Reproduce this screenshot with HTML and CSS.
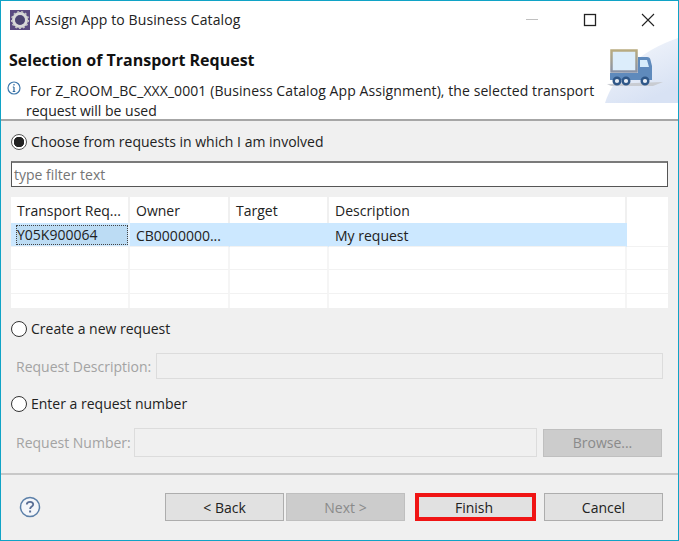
FILE: index.html
```html
<!DOCTYPE html>
<html lang="en">
<head>
    <meta charset="UTF-8">
    <meta name="viewport" content="width=device-width, initial-scale=1.0">
    <title>Assign App to Business Catalog</title>
    <link rel="stylesheet" href="styles.css">
</head>
<body>
<div class="window">

    <!-- Title bar -->
    <div class="title-bar">
        <svg class="app-icon" width="20" height="20" viewBox="0 0 20 20">
            <rect width="20" height="20" fill="#5a4a80"/>
            <circle cx="10" cy="10" r="6.5" fill="none" stroke="#d8d8d8" stroke-width="3"/>
            <circle cx="10" cy="10" r="8.3" fill="none" stroke="#c4c4c4" stroke-width="1.6" stroke-dasharray="2 2"/>
            <circle cx="10" cy="10" r="4.6" fill="#4b4470"/>
        </svg>
        <span class="title-text">Assign App to Business Catalog</span>
        <div class="window-controls">
            <svg width="14" height="14" viewBox="0 0 14 14"><path d="M1 6.500H13" stroke="#c0c0c0" fill="none"/></svg>
            <svg width="14" height="14" viewBox="0 0 14 14"><rect x="1.500" y="1.500" width="11" height="11" fill="none" stroke="#222" stroke-width="1.300"/></svg>
            <svg width="14" height="14" viewBox="0 0 14 14"><path d="M1 1L13 13M13 1L1 13" stroke="#222" fill="none" stroke-width="1.100"/></svg>
        </div>
    </div>

    <!-- Wizard header -->
    <div class="wizard-header">
        <svg class="banner" width="75" height="65" viewBox="0 0 75 65">
            <defs>
                <linearGradient id="swoosh" x1="0" y1="0" x2="0.5" y2="1">
                    <stop offset="0" stop-color="#f6f8fc"/>
                    <stop offset="1" stop-color="#d8e2f4"/>
                </linearGradient>
                <linearGradient id="box" x1="0" y1="0" x2="0" y2="1">
                    <stop offset="0" stop-color="#b8ab80"/>
                    <stop offset="1" stop-color="#8a93a6"/>
                </linearGradient>
            </defs>
            <path d="M2 65C10 38 38 12 75 0V65Z" fill="url(#swoosh)"/>
            <path d="M4 46L60 44L50 48H8Z" fill="#c9ccd2"/>
            <rect x="8.500" y="12.500" width="25" height="21" fill="#dcedfb" stroke="url(#box)" stroke-width="2.500"/>
            <path d="M35 19H44Q47 19 47.500 22L49 28V42H7V35H35Z" fill="#5f8abc"/>
            <path d="M37 22H44L46 29H37Z" fill="#d7ecfb"/>
            <circle cx="14" cy="43" r="3.300" fill="#e8eef6" stroke="#2f5788" stroke-width="2.400"/>
            <circle cx="23" cy="43" r="3.300" fill="#e8eef6" stroke="#2f5788" stroke-width="2.400"/>
            <circle cx="42" cy="43" r="3.300" fill="#e8eef6" stroke="#2f5788" stroke-width="2.400"/>
        </svg>
        <h1>Selection of Transport Request</h1>
        <div class="message">
            <svg class="info-icon" width="14" height="14" viewBox="0 0 14 14">
                <circle cx="7" cy="7" r="6" fill="#fff" stroke="#3d78ad" stroke-width="1.200"/>
                <path d="M7 3V4.600M7 6V10.500M5.700 10.500H8.300M5.800 6H7" stroke="#2f6a9f" fill="none" stroke-width="1.200"/>
            </svg>
            <p><span class="first-line">For Z_ROOM_BC_XXX_0001 (Business Catalog App Assignment), the selected transport</span><br>request will be used</p>
        </div>
    </div>

    <!-- Request selection -->
    <div class="content">
        <label class="radio-row first"><span class="radio checked"></span>Choose from requests in which I am involved</label>
        <div class="filter">type filter text</div>

        <table class="requests">
            <colgroup>
                <col class="col-request">
                <col class="col-owner">
                <col class="col-target">
                <col class="col-desc">
                <col>
            </colgroup>
            <thead>
                <tr>
                    <th>Transport Req...</th>
                    <th>Owner</th>
                    <th>Target</th>
                    <th>Description</th>
                    <th></th>
                </tr>
            </thead>
            <tbody>
                <tr class="selected">
                    <td><span class="focus-cell">Y05K900064</span></td>
                    <td>CB0000000...</td>
                    <td></td>
                    <td>My request</td>
                    <td class="filler"></td>
                </tr>
                <tr><td></td><td></td><td></td><td></td><td></td></tr>
                <tr class="tall"><td></td><td></td><td></td><td></td><td></td></tr>
                <tr class="last"><td></td><td></td><td></td><td></td><td></td></tr>
            </tbody>
        </table>

        <label class="radio-row create"><span class="radio"></span>Create a new request</label>
        <div class="field-row description">
            <span class="field-label">Request Description:</span>
            <div class="field"></div>
        </div>

        <label class="radio-row enter"><span class="radio"></span>Enter a request number</label>
        <div class="field-row number">
            <span class="field-label">Request Number:</span>
            <div class="field"></div>
            <button class="btn browse" disabled>Browse...</button>
        </div>
    </div>

    <!-- Button bar -->
    <div class="button-bar">
        <svg class="help-icon" width="22" height="22" viewBox="0 0 22 22">
            <circle cx="11" cy="11" r="9.500" fill="#f4f6fa" stroke="#5b7fa8" stroke-width="1.500"/>
            <path d="M7.800 8.500C7.800 6.700 9.200 5.800 11 5.800C12.900 5.800 14.200 6.800 14.200 8.400C14.200 10.600 11.100 10.600 11.100 13" fill="none" stroke="#5a6f96" stroke-width="1.800"/>
            <rect x="10.100" y="14.500" width="2" height="2" fill="#5a6f96"/>
        </svg>
        <button class="btn back">&lt; Back</button>
        <button class="btn next" disabled>Next &gt;</button>
        <button class="btn finish">Finish</button>
        <button class="btn cancel">Cancel</button>
    </div>
</div>
</body>
</html>
```

FILE: styles.css
```css
html, body {
    margin: 0;
    height: 100%;
}

body {
    font-family: "Open Sans", "Noto Sans", sans-serif;
    font-size: 14px;
    color: #222;
}

.window {
    box-sizing: border-box;
    height: 541px;
    border: 1px solid #10a3c6;
    background-color: #f0f0f0;
    display: flex;
    flex-direction: column;
    position: relative;
    overflow: hidden;
}

/* title bar */
.title-bar {
    height: 37px;
    background-color: #fff;
    display: flex;
    align-items: center;
    padding-left: 9px;
}

.app-icon {
    margin-right: 5px;
}

.title-text {
    font-size: 14px;
    letter-spacing: 0.1px;
}

.window-controls {
    margin-left: auto;
    display: flex;
    gap: 44px;
    padding-right: 23px;
}

/* wizard header */
.wizard-header {
    height: 81px;
    background-color: #fff;
    border-bottom: 2px solid #a6a6a6;
    box-sizing: content-box;
    position: relative;
}

.banner {
    position: absolute;
    right: 0;
    top: 0;
}

h1 {
    margin: 0;
    padding: 12px 0 0 8px;
    font-size: 16px;
    line-height: 20px;
    font-weight: 700;
    color: #111;
}

.message {
    display: flex;
    position: relative;
    padding: 11px 0 0 6px;
}

.info-icon {
    flex: none;
}

.message p {
    margin: 0;
    padding-left: 5px;
    line-height: 20px;
}

.first-line {
    padding-left: 4px;
    letter-spacing: 0.08px;
}

/* middle part */
.content {
    flex: 1;
    padding: 0 10px;
}

.radio-row {
    box-sizing: border-box;
    display: flex;
    align-items: center;
    gap: 4px;
    height: 20px;
    padding-bottom: 2px;
}

.radio-row.first {
    margin-top: 11px;
}

.radio-row.create {
    margin-top: 11px;
}

.radio-row.enter {
    margin-top: 15px;
}

.radio {
    box-sizing: border-box;
    width: 16px;
    height: 16px;
    margin-top: 2px;
    border: 1px solid #333;
    border-radius: 50%;
    background-color: #fff;
    flex: none;
}

.radio.checked {
    border-color: #555;
    background: radial-gradient(circle, #222 0 5px, #fff 5.500px);
}

.filter {
    box-sizing: border-box;
    margin-top: 9px;
    height: 26px;
    width: 657px;
    border: 1px solid #555;
    border-top: 2px solid #7a7a7a;
    background-color: #fff;
    color: #757575;
    padding-left: 2px;
    line-height: 24px;
}

/* table */
.requests {
    margin-top: 10px;
    width: 657px;
    table-layout: fixed;
    border-collapse: separate;
    border-spacing: 0;
    background-color: #fff;
}

.col-request { width: 119px; }
.col-owner { width: 100px; }
.col-target { width: 99px; }
.col-desc { width: 298px; }

.requests th {
    height: 26px;
    padding: 0 0 0 6px;
    font-weight: 400;
    text-align: left;
    border-right: 2px solid #f0f0f0;
}

.requests th:last-child,
.requests td:last-child {
    border-right: none;
}

.requests td {
    box-sizing: border-box;
    height: 23px;
    padding: 0 0 0 6px;
    border-right: 2px solid #f5f5f5;
    border-bottom: 1px solid #f2f2f2;
    white-space: nowrap;
}

.requests tr.tall td {
    height: 24px;
}

.requests tr.last td {
    height: 14px;
    border-bottom: none;
}

.requests .selected td {
    height: 24px;
    padding-top: 2px;
    background-color: #cce8ff;
    border-right-color: #cce8ff;
    border-bottom-color: #f2f2f2;
}

.requests .selected td.filler {
    background-color: #fff;
}

.requests .selected td:first-child {
    padding: 0;
    border-right-color: #e4f2fd;
}

.focus-cell {
    box-sizing: border-box;
    display: block;
    height: 20px;
    line-height: 20px;
    margin: 1px 0 0 5px;
    padding-left: 1px;
    background-color: #bcdcf4;
    outline: 1px dotted #444;
    outline-offset: -1px;
}

/* disabled fields */
.field-row {
    display: flex;
    align-items: center;
    padding-left: 5px;
    color: #a3a3a3;
}

.field-row.description {
    margin-top: 14px;
    height: 26px;
}

.field-row.number {
    margin-top: 14px;
    height: 29px;
}

.field-label {
    flex: none;
    margin-right: 5px;
}

.number .field-label {
    margin-right: 3px;
}

.field {
    box-sizing: border-box;
    flex: 1;
    height: 100%;
    border: 1px solid #d9d9d9;
    border-right-color: #fbfbfb;
    border-bottom-color: #fbfbfb;
    outline: 1px solid #dcdcdc;
    outline-offset: -1px;
    margin-right: 5px;
}

.number .field {
    margin-right: 6px;
}

/* buttons */
.btn {
    box-sizing: border-box;
    width: 119px;
    height: 28px;
    padding: 0;
    border: 1px solid #adadad;
    background-color: #e1e1e1;
    color: #222;
    font-family: inherit;
    font-size: 14px;
}

.btn:disabled {
    background-color: #cccccc;
    border-color: #bfbfbf;
    color: #8a8a8a;
}

.browse {
    margin-right: 6px;
}

.button-bar {
    box-sizing: border-box;
    height: 67px;
    border-top: 2px solid #c8c8c8;
    padding: 18px 15px 0 0;
    display: flex;
    align-items: flex-start;
}

.help-icon {
    margin: 3px 124px 0 18px;
}

.next {
    margin-left: 2px;
}

.finish {
    margin-left: 10px;
    width: 121px;
    border: 4px solid #f01414;
    padding-right: 3px;
}

.cancel {
    margin-left: 8px;
}
```
